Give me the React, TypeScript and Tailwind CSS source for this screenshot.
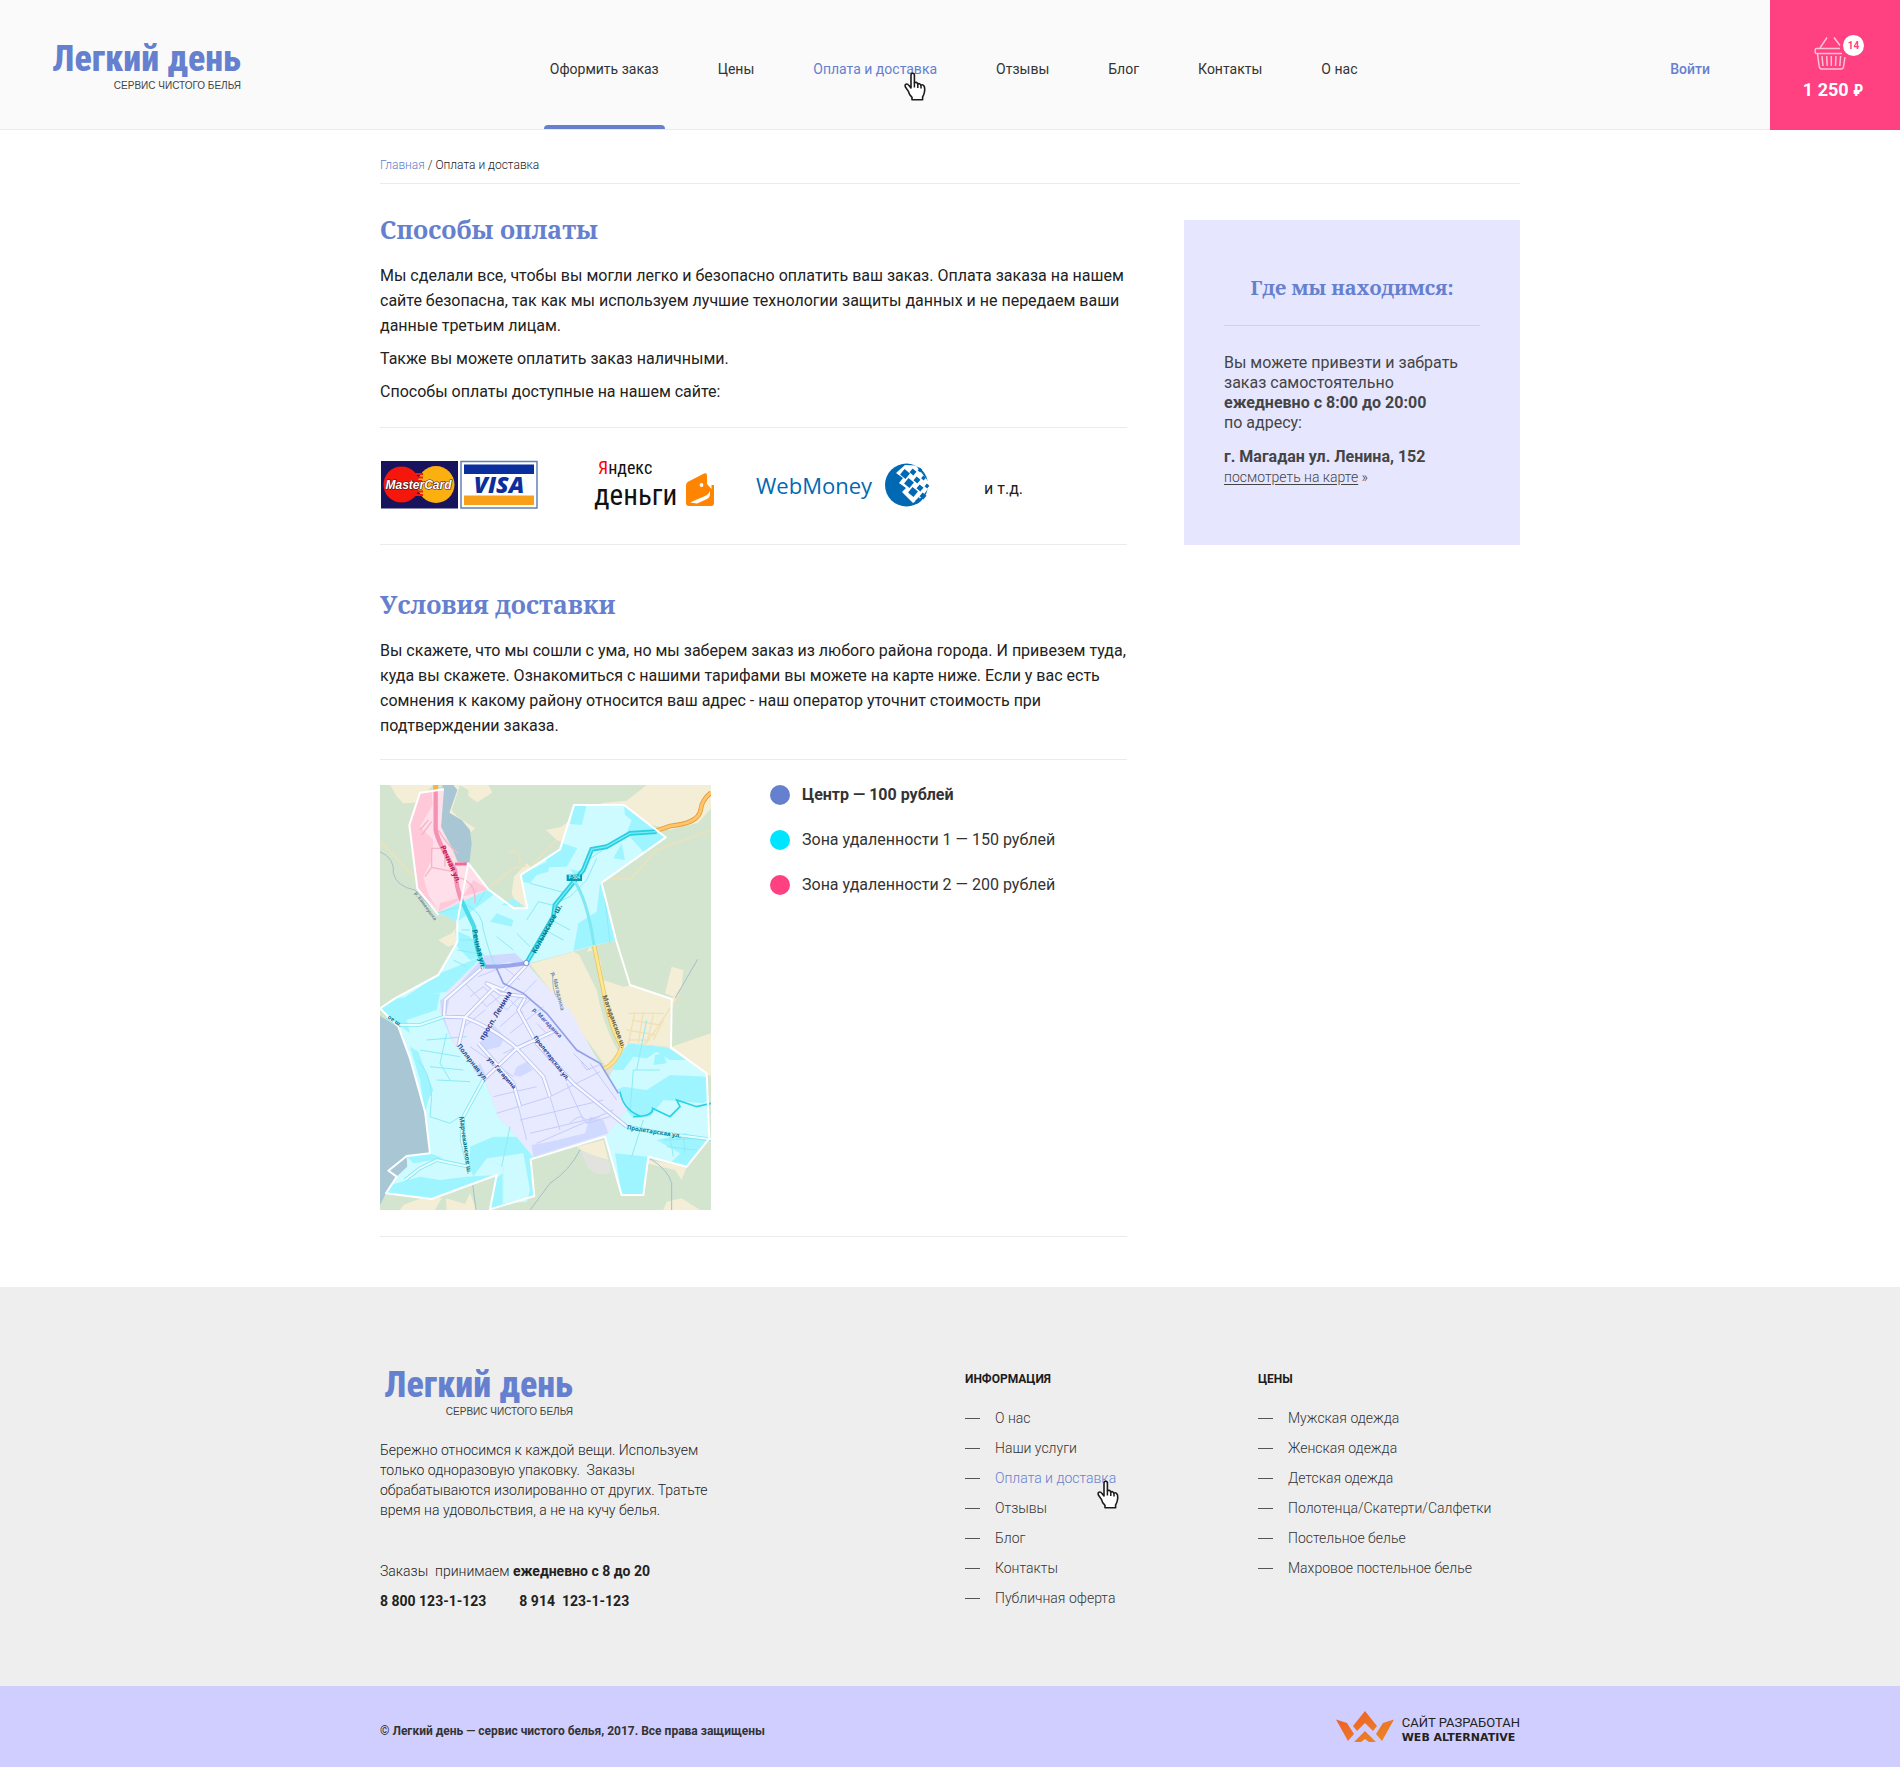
import React from "react";

const NAV = ["Оформить заказ", "Цены", "Оплата и доставка", "Отзывы", "Блог", "Контакты", "О нас"];
const INFO = ["О нас", "Наши услуги", "Оплата и доставка", "Отзывы", "Блог", "Контакты", "Публичная оферта"];
const PRICES = [
  "Мужская одежда",
  "Женская одежда",
  "Детская одежда",
  "Полотенца/Скатерти/Салфетки",
  "Постельное белье",
  "Махровое постельное белье",
];
const ZONES = [
  { dot: "bg-[#6580ce]", text: "Центр — 100 рублей", weight: "font-bold" },
  { dot: "bg-[#00e5ff]", text: "Зона удаленности 1 — 150 рублей", weight: "font-normal" },
  { dot: "bg-[#ff4081]", text: "Зона удаленности 2 — 200 рублей", weight: "font-normal" },
];

function Logo() {
  return (
    <a href="#" className="flex w-[190px] flex-col items-end gap-1">
      <span className="whitespace-nowrap font-['Roboto_Condensed','Roboto',sans-serif] text-[36px] leading-9 font-extrabold text-[#6580ce]">
        Легкий день
      </span>
      <span className="font-['Liberation_Sans',sans-serif] text-[10px] leading-[10px] whitespace-nowrap text-[#444]">
        СЕРВИС ЧИСТОГО БЕЛЬЯ
      </span>
    </a>
  );
}

function Hand({ className }: { className: string }) {
  return (
    <svg aria-hidden="true" viewBox="0 0 22 29" className={`pointer-events-none absolute h-[29px] w-[22px] ${className}`}>
      <path
        d="M7 3.2Q7 1.2 8.7 1.2 10.4 1.2 10.4 3.2V10.8L11 10.5Q13 9.8 13.6 12 15.8 10.8 16.8 13.2 18.8 12 20 14Q21 15.5 20.6 19 20.4 22 18.6 25V27.8H8V25.4Q5 22.5 4.4 19.4L1.4 15Q.6 12.8 2 12.2 3.6 11.6 5 13.6L7 16Z"
        fill="#fff"
        stroke="#1c1c1c"
        strokeWidth="1.6"
        strokeLinejoin="round"
      />
      <path d="M10.4 10.5V15.5M13.8 12V16M17 13.5V16.5" stroke="#1c1c1c" strokeWidth="1.5" fill="none" />
    </svg>
  );
}

function Basket() {
  return (
    <svg aria-hidden="true" viewBox="0 0 32 34" className="h-[34px] w-8" fill="none" stroke="#ffc3d6" strokeWidth="1.5">
      <path d="M6 12L13 1.5M20 1.5L26 9.5" />
      <path d="M26 12.5H2.5Q1.2 12.5 1.2 13.8V16.2Q1.2 17.6 2.5 17.6H28" />
      <path d="M3.5 17.8L5.2 30.5Q5.7 33 8 33H27Q29 33 29.5 30.8L31 21" />
      <path d="M8 20L9 30M12.7 20L13.2 30M17.3 20V30M22 20L21.5 30M26.6 20L25.8 30" />
    </svg>
  );
}

function Cards() {
  return (
    <svg role="img" aria-label="MasterCard, Visa" viewBox="0 0 158 50" className="h-[50px] w-[158px]">
      <rect x="1" y="1" width="77" height="47.500" fill="#17135c" />
      <circle cx="21.500" cy="24.500" r="18" fill="#f5160c" />
      <circle cx="56" cy="24.500" r="18.500" fill="#fbb010" />
      <path d="M35 14h8M33 17.500h10M32 21h10M32 28h10M33 31.500h10M35 35h8" stroke="#f5160c" strokeWidth="1.800" />
      <text x="38.500" y="29" textAnchor="middle" fontFamily="Liberation Sans" fontStyle="italic" fontWeight="700" fontSize="12" fill="#fff" stroke="#3b1a1a" strokeWidth="1.200" paintOrder="stroke">
        MasterCard
      </text>
      <rect x="81" y="1.500" width="76" height="46.500" fill="#fff" stroke="#6580b4" strokeWidth="1.500" />
      <rect x="84" y="4.500" width="70" height="9.500" fill="#0a2f9c" />
      <rect x="84" y="35.500" width="70" height="9.500" fill="#f9a01b" />
      <text x="119" y="32.500" textAnchor="middle" fontFamily="Open Sans" fontStyle="italic" fontWeight="800" fontSize="23" fill="#0a2f9c">
        VISA
      </text>
    </svg>
  );
}

function YandexMoney() {
  return (
    <svg role="img" aria-label="Яндекс Деньги" viewBox="0 0 122 54" className="h-[54px] w-[122px]">
      <text x="4" y="16" fontFamily="Roboto Condensed, Open Sans" fontSize="18" fill="#111">
        <tspan fill="#f00">Я</tspan>ндекс
      </text>
      <text x="0" y="47" fontFamily="Roboto Condensed, Open Sans" fontSize="29" fill="#111">
        деньги
      </text>
      <path d="M92 27Q92 24.500 94.500 23.500L110 15.500Q113 14.500 113 17.500V26L117.500 31V27H120V45Q120 48 117 48H95Q92 48 92 45Z" fill="#ff8500" />
      <path d="M96 44.500L111 38Q115 36 116 32.500V36Q116 40 112 41.500L103 45.500Z" fill="#fff" />
      <circle cx="107.500" cy="27" r="1.900" fill="#fff" />
    </svg>
  );
}

function WebMoney() {
  const cells = [
    [20, 10, 7], [24, 19, 7], [28, 28, 7],
    [28, 8, 5], [32, 16, 5], [35, 24, 5], [38, 32, 5],
    [35, 6, 3.4], [38.5, 14, 3.4], [42, 22, 3.4],
  ];
  return (
    <span className="flex items-center gap-[13px]">
      <span className="font-['Open_Sans',sans-serif] text-[22px] leading-7 text-[#0069b4]">WebMoney</span>
      <svg aria-hidden="true" viewBox="0 0 45 44" className="h-11 w-[45px]">
        <clipPath id="globe">
          <circle cx="21.500" cy="22" r="21.500" />
        </clipPath>
        <circle cx="21.500" cy="22" r="21.500" fill="#0069b4" />
        <path d="M20 2L31 2.500 46 22 37 34 28 40 17 29 21 25 14 20 18 15 11 10Z" fill="#fff" />
        <path d="M30 38L34 34 37 40 32 43Z" fill="#0069b4" clipPath="url(#globe)" />
        {cells.map(([x, y, s]) => (
          <rect key={`${x}-${y}`} x={x - s / 2} y={y - s / 2 + 1} width={s} height={s} transform={`rotate(40 ${x} ${y + 1})`} fill="#0069b4" />
        ))}
      </svg>
    </span>
  );
}

function Label({ x, y, r, c = "#2c3f93", s = 22, children }: { x: number; y: number; r: number; c?: string; s?: number; children: string }) {
  return (
    <text transform={`translate(${x} ${y}) rotate(${r})`} fontFamily="Open Sans" fontWeight="700" fontSize={s} fill={c}>
      {children}
    </text>
  );
}

function ZoneMap() {
  return (
    <svg role="img" aria-label="Карта зон доставки" viewBox="30 15 993 1275" className="h-[425px] w-[331px] shrink-0">
      <rect x="30" y="15" width="993" height="1275" fill="#d4e5cf" />
      <g fill="#f5eed7">
        <path d="M30 15H60L82 52 100 70 135 68 190 15Z" />
        <path d="M268 15H355L367 38 322 67 295 48 296 30Z" />
        <path d="M240 15H270L255 60 245 90 262 110 315 145 300 160 240 110Z" />
        <path d="M690 70L770 62 830 15H1023V85L985 128 900 150 800 120 740 80Z" />
        <path d="M528 150L575 140 600 120 585 190 560 180Z" />
        <path d="M432 290L470 250 485 265 455 285 470 385 440 375 425 340Z" />
        <path d="M205 480L245 460 262 440 262 490 235 500Z" />
        <path d="M480 552L610 515 640 530 660 500 690 540 700 600 760 620 780 617 905 655 930 630 900 700 905 800 1023 760V890L890 800 780 790 720 880 680 820 540 630Z" />
        <path d="M905 560L940 570 935 620 910 650 885 640Z" />
        <path d="M100 1275L180 1245 215 1255 195 1290H90ZM228 1255L285 1272 300 1240 320 1290H230ZM620 1100L700 1080 715 1140 650 1120ZM830 1140L900 1150 950 1160 935 1200 915 1170 830 1150ZM890 1265L935 1255 990 1290H880Z" />
      </g>
      <path d="M625 520L675 510 700 630 760 790 745 815Q700 740 680 630Z" fill="#d4e5cf" />
      <path d="M630 1110L720 1145 722 1175Q690 1195 655 1165ZM740 820L770 800 775 850 720 890 708 862Z" fill="#e2e2df" />
      <g fill="none" stroke="#e9e2bd" strokeWidth="5">
        <path d="M30 182L130 290M360 318L430 265 470 258M480 262L560 180M1023 150L860 210 780 298 725 295M450 250Q450 200 415 218" />
      </g>
      <path d="M218 15H250L262 30 238 98 275 120 300 150 305 190 298 252H265L250 210 213 140Z" fill="#a9c6d5" />
      <path d="M30 708L85 742 120 835 165 995 180 1120 110 1128 112 1160 75 1195 48 1240 30 1275Z" fill="#a9c6d5" />
      <g fill="none" stroke="#a4bfcb" strokeWidth="3">
        <path d="M30 215Q75 235 70 280 80 320 135 330M135 330L205 405" />
        <path d="M983 538L915 655M550 575Q540 620 570 680 590 730 612 745 600 780 625 810M630 1110Q600 1170 540 1210L480 1290M840 1135Q895 1170 905 1210V1290M305 1190L318 1290" />
      </g>
      <path d="M197 15V150" stroke="#f7b04f" strokeWidth="15" />
      <path d="M1023 38Q995 60 992 90 985 130 900 138L860 152" fill="none" stroke="#e29a3c" strokeWidth="14" />
      <path d="M1023 38Q995 60 992 90 985 130 900 138L860 152" fill="none" stroke="#ffc56b" strokeWidth="9" />
      <path d="M672 495L700 630Q720 740 755 800 740 850 700 868" fill="none" stroke="#e9c75f" strokeWidth="13" />
      <path d="M672 495L700 630Q720 740 755 800 740 850 700 868" fill="none" stroke="#fde694" strokeWidth="8" />
      <g fill="none" stroke="#efe1b6" strokeWidth="4">
        <path d="M775 700H880M785 720L870 735M770 750L860 765M775 780H840M795 695L775 790M820 695L805 790M850 705L830 790M880 720L850 780M930 640L850 760 800 820" />
      </g>

      <path d="M150 38L222 28 213 140 262 245 295 250 355 328 205 398 142 325 118 135Z" fill="#ffe0ea" />
      <path d="M150 38L185 35 188 75 150 140 190 180 185 240 160 290 175 345 205 390 142 325 118 135Z" fill="#ffc9da" />
      <path d="M355 328L310 300 270 360 205 395 210 370Z" fill="#ffc9da" />

      <path
        d="M205 398L355 328 432 385H472L452 285 570 208 612 75H762L887 172 695 308 738 480 470 552 435 520 345 527 230 635 208 690 250 790 345 900 385 1010 440 1070 490 1130 482 1138 493 1248 360 1288 380 1185 185 1257 48 1240 80 1190 112 1160 110 1128 180 1120 165 995 120 835 85 740 30 685 75 655 205 585 262 485V425Z"
        fill="#cdfbff"
      />
      <path d="M775 790L895 803 1010 880 1018 1075 950 1160 835 1130 820 1245H755L705 1070 775 985 715 895Z" fill="#cdfbff" />
      <g fill="#9ff5ff">
        <path d="M612 75H650L635 135 600 132ZM762 77L887 172 820 215 770 160 785 120 765 105ZM578 190L622 205 590 260 535 262 525 230 570 208ZM600 268L640 275 625 300ZM755 190L765 240 730 235ZM452 285L540 240 535 275 500 285 480 310 455 305ZM690 310L738 480 610 512 625 430 680 395Z" />
        <path d="M205 398L355 328 370 345 330 375 262 425ZM255 450L300 470 345 527 300 540 262 500ZM210 580L340 527 230 635 100 655ZM30 685L75 655 210 640 200 690 110 720 120 760 100 745Z" />
        <path d="M120 800L145 815 165 870 190 930 175 960 165 1000 150 900ZM300 1100L370 1070 440 1070 488 1130 482 1138 493 1248 400 1280 400 1160 350 1135 310 1190 300 1165ZM60 1215L150 1190 210 1200 290 1190 380 1185 185 1257 48 1240ZM110 1130L180 1120 220 1135 130 1150ZM360 1288L372 1200 398 1180V1280Z" />
        <path d="M775 790L895 803 950 840 900 840 860 815 830 835 790 830 760 870 725 870ZM720 940L760 920 830 930 900 885 1010 890 1015 960 1000 970 880 960 840 1010 790 1015 760 980ZM735 1120L835 1130 820 1245H755ZM860 1080L945 1060 1010 1080 950 1160 900 1150 930 1120Z" />
        <path d="M430 355L465 380 395 375ZM380 400L430 420 425 440 360 425ZM880 820L890 850 850 855 855 825Z" />
      </g>
      <path d="M350 1135L460 1120 480 1230 470 1265 400 1270 400 1160Z" fill="#cdfbff" />

      <path d="M345 527L435 520 470 552 540 630 600 690 660 800 715 895 750 940 775 985 705 1070 490 1130 440 1070 385 1010 345 900 250 790 208 690 230 635Z" fill="#e8eaff" />
      <g fill="#d0d9ff">
        <path d="M345 527L435 520 470 552 440 560 420 545 340 565 270 610ZM210 660L240 650 225 720 250 790 215 710ZM370 735L405 770 390 800 340 812 328 790ZM440 860L470 845 488 870 450 890 430 885ZM485 1095L540 1085 645 1060 660 1010 700 1020 715 1060 490 1130ZM330 850L345 880 340 900 310 870Z" />
      </g>

      <g fill="none" stroke="#8debf5" strokeWidth="3">
        <path d="M205 398L290 375Q340 400 340 450 355 510 375 560M345 335L320 375M275 450H300M270 480H310M262 510L320 520M250 540L290 560M470 420L505 365 545 375 600 350 650 300 680 235M545 420L600 450M525 450L580 480M440 460L480 500M380 470L430 510M700 310L720 490M640 250L720 195M480 310L590 340" />
        <path d="M170 780L290 770M150 810L270 830M180 860L280 870M200 900L300 905M230 760L210 850 240 900M140 840Q180 870 185 950L180 1010 240 1030 270 1010M420 1040L395 1160M870 870H790L780 1000M880 1080L990 1075M890 1100L980 1110M900 1070L910 1130M940 1065L945 1120M820 1020L785 1130M830 720L800 870" />
      </g>
      <path d="M790 1010Q850 1010 848 985L900 1010 930 980 920 960 980 980 1023 970M750 935Q760 990 810 1008" fill="none" stroke="#25d3e5" strokeWidth="5" />
      <g fill="none" stroke="#f5b4cb" strokeWidth="4">
        <path d="M150 150L175 120M155 165L185 125M185 205H225V260M185 205V262L250 275M185 262L165 290M255 290Q320 300 315 370M205 150Q235 200 265 220" />
      </g>

      <g fill="none" stroke="#c6ccfa" strokeWidth="3">
        <path d="M285 610L350 680 400 640 460 700M325 590L400 560 450 600M300 650L340 620 410 690 500 600M370 700L420 650M390 740L480 660M420 760L520 680M345 690L270 750M400 820L480 780M380 1000L540 950 690 875M370 950L500 920M440 960L470 1080M540 950L570 1050M590 910L640 1020M660 850L740 960M630 840L650 870 700 850M450 1020L700 960M480 1060L690 1010M500 1090L730 990M300 800L430 890M610 820L660 870M500 730L540 770" />
        <path d="M600 1030Q640 990 650 1030L720 1010" />
      </g>
      <g fill="none" stroke="#b9c1f3" strokeWidth="12" strokeLinejoin="round">
        <path d="M340 560L225 660 222 710 285 712 370 625M285 712L265 800M285 712Q380 750 440 805L520 890 540 950M470 650L390 640 350 610 400 630 470 555M465 655L445 690 500 790 610 910 770 1040M440 805L340 900M430 910L450 980M560 750L440 805M325 790L430 910" />
      </g>
      <g fill="none" stroke="#f8f8ff" strokeWidth="7" strokeLinejoin="round">
        <path d="M340 560L225 660 222 710 285 712 370 625M285 712L265 800M285 712Q380 750 440 805L520 890 540 950M470 650L390 640 350 610 400 630 470 555M465 655L445 690 500 790 610 910 770 1040M440 805L340 900M430 910L450 980M560 750L440 805M325 790L430 910" />
      </g>
      <path d="M222 710L150 735 85 735 50 710M340 900L280 1010 275 1080 295 1160 200 1140 150 1165 105 1200M770 1040L880 1060 1023 1078" fill="none" stroke="#82e7f2" strokeWidth="11" />
      <path d="M222 710L150 735 85 735 50 710M340 900L280 1010 275 1080 295 1160 200 1140 150 1165 105 1200M770 1040L880 1060 1023 1078" fill="none" stroke="#e8fdff" strokeWidth="6" />

      <path d="M375 555L400 610 460 640 530 700 620 810 690 850 745 940" fill="none" stroke="#93a0ea" strokeWidth="5" />
      <path d="M197 30V150Q205 190 255 270 260 330 275 362" fill="none" stroke="#f392b3" strokeWidth="13" />
      <path d="M255 252H290" stroke="#f06a95" strokeWidth="9" />
      <path d="M275 362L312 440Q318 520 345 560" fill="none" stroke="#4bdceb" strokeWidth="13" />
      <path d="M345 560Q410 560 468 550" fill="none" stroke="#97a6ea" strokeWidth="12" />
      <path d="M470 548L550 410 555 375 640 270 665 208 710 200 780 160 860 155" fill="none" stroke="#27cfe0" strokeWidth="14" />
      <path d="M470 548L550 410 555 375 640 270 665 208 710 200 780 160 860 155" fill="none" stroke="#7beaf5" strokeWidth="4" />
      <path d="M610 300Q650 350 672 495" fill="none" stroke="#7fe8f2" strokeWidth="9" />
      <circle cx="469" cy="549" r="8" fill="#fff" stroke="#6b8be0" strokeWidth="3" />

      <path
        d="M205 405L142 325 118 135 150 38 222 28M295 250L355 328 432 385H472L452 285 570 208 612 75H762L887 172 695 308 738 480 780 615 905 657 903 803 1010 880 1018 1075 950 1160 835 1130 820 1245H755L705 1070 482 1138 493 1248 360 1288 380 1185 185 1257 48 1240 80 1190 55 1172 110 1128 180 1120 165 995 120 835 85 740 30 685 75 655 205 585 262 485V425Z"
        fill="none"
        stroke="#fff"
        strokeWidth="6"
        strokeLinejoin="round"
      />

      <rect x="590" y="284" width="46" height="19" fill="#069aaa" />
      <text x="613" y="298" textAnchor="middle" fontFamily="Open Sans" fontWeight="600" fontSize="13" fill="#d8fbff">Р-504</text>
      <Label x={211} y={200} r={66} c="#c0174f" s={22}>Речная ул.</Label>
      <Label x={306} y={450} r={77} c="#08798a" s={22}>Речная ул.</Label>
      <Label x={497} y={522} r={-61} c="#08798a">Колымское ш.</Label>
      <Label x={340} y={782} r={-59}>просп. Ленина</Label>
      <Label x={260} y={798} r={52} c="#1b5a8d" s={20}>Полярная ул.</Label>
      <Label x={352} y={838} r={49} s={18}>ул. Гагарина</Label>
      <Label x={489} y={773} r={52} s={18}>Пролетарская ул.</Label>
      <Label x={487} y={690} r={46} c="#4c5fb6" s={17}>р. Магаданка</Label>
      <Label x={544} y={578} r={76} c="#7890ac" s={17}>р. Магаданка</Label>
      <Label x={697} y={648} r={70} c="#6b6250" s={20}>Магаданское ш.</Label>
      <Label x={268} y={1010} r={82} c="#08798a" s={19}>Марчеканское ш.</Label>
      <Label x={770} y={1048} r={9} c="#08798a" s={18}>Пролетарская ул.</Label>
      <Label x={52} y={714} r={35} c="#08798a" s={17}>ое ш.</Label>
      <Label x={133} y={340} r={54} c="#72869a" s={14}>р. Каменушка</Label>
    </svg>
  );
}

function FooterList({ title, items, active }: { title: string; items: string[]; active?: string }) {
  return (
    <nav aria-label={title} className="mt-[2px]">
      <h3 className="text-xs leading-5 font-bold text-[#1c1c1c] uppercase">{title}</h3>
      <ul className="mt-[14px]">
        {items.map((item) => (
          <li key={item} className="flex h-[30px] items-center gap-[15px] text-sm font-light whitespace-nowrap">
            <span className="h-px w-[15px] bg-[#555]" />
            {item === active ? (
              <a href="#" className="relative text-[#6580ce]">
                {item}
                <Hand className="top-3 -right-[3px]" />
              </a>
            ) : (
              <a href="#" className="text-[#333]">{item}</a>
            )}
          </li>
        ))}
      </ul>
    </nav>
  );
}

const H2 = "font-['Noto_Serif','Liberation_Serif',serif] text-[25px] leading-9 font-bold text-[#6580ce]";

export default function App() {
  return (
    <div className="min-h-screen bg-white font-['Roboto',sans-serif] text-[#222]">
      <header className="flex h-[130px] border-b border-[#ebebeb] bg-[#fafafa]">
        <div className="flex flex-1 justify-between pr-[60px] pl-[51px]">
          <div className="pt-[41px]"><Logo /></div>
          <nav aria-label="Главное меню" className="mr-1 flex gap-[47px]">
            {NAV.map((item, i) => (
              <a key={item} href="#" className={i === 2 ? "relative flex items-center px-[6px] pt-2 text-sm text-[#6580ce]" : "relative flex items-center px-[6px] pt-2 text-sm text-[#333]"}>
                <span className="relative">
                  {item}
                  {i === 2 && <Hand className="top-[13px] right-[11px]" />}
                </span>
                {i === 0 && <span className="absolute inset-x-0 bottom-0 h-1 rounded-t bg-[#6580ce]" />}
              </a>
            ))}
          </nav>
          <a href="#" className="flex items-center pt-2 text-sm font-medium text-[#6580ce]">Войти</a>
        </div>
        <a href="#" aria-label="Корзина: 14 вещей, 1 250 ₽" className="-mb-px flex w-[130px] flex-col items-center bg-[#ff4081] pt-9 text-white">
          <span className="relative -ml-[10px]">
            <Basket />
            <span className="absolute -top-px left-[29px] flex h-[21px] w-[21px] items-center justify-center rounded-full bg-white text-[10px] font-bold text-[#ff4081]">14</span>
          </span>
          <span className="mt-2 pr-1 text-lg leading-6 font-bold">
            1 250 <span className="font-['Roboto_Condensed',sans-serif] text-base">₽</span>
          </span>
        </a>
      </header>

      <div className="mx-auto max-w-[1140px]">
        <nav aria-label="Путь" className="border-b border-[#ebebeb] pt-[25px] pb-2 text-xs leading-5 font-light text-[#222]">
          <a href="#" className="text-[#6580ce]">Главная</a> / Оплата и доставка
        </nav>

        <div className="flex items-start justify-between">
          <main className="w-[747px] pt-[27px]">
            <h2 className={H2}>Способы оплаты</h2>
            <div className="mt-4 space-y-2 text-base leading-[25px]">
              <p>
                Мы сделали все, чтобы вы могли легко и безопасно оплатить ваш заказ. Оплата заказа на нашем сайте безопасна,
                так как мы используем лучшие технологии защиты данных и не передаем ваши данные третьим лицам.
              </p>
              <p>Также вы можете оплатить заказ наличными.</p>
              <p>Способы оплаты доступные на нашем сайте:</p>
            </div>
            <div className="mt-[23px] flex h-[118px] items-center border-y border-[#ebebeb] pb-[3px]">
              <Cards />
              <span className="ml-14"><YandexMoney /></span>
              <span className="ml-10"><WebMoney /></span>
              <span className="mt-2 ml-[54px]">и т.д.</span>
            </div>

            <h2 className={`${H2} mt-[41px]`}>Условия доставки</h2>
            <p className="mt-4 text-base leading-[25px]">
              Вы скажете, что мы сошли с ума, но мы заберем заказ из любого района города. И привезем туда, куда вы скажете.
              Ознакомиться с нашими тарифами вы можете на карте ниже. Если у вас есть сомнения к какому району относится ваш
              адрес - наш оператор уточнит стоимость при подтверждении заказа.
            </p>
            <div className="mt-[21px] mb-[50px] flex border-y border-[#ebebeb] pt-[25px] pb-[26px]">
              <ZoneMap />
              <ul className="ml-[59px] flex flex-col gap-[25px]">
                {ZONES.map((z) => (
                  <li key={z.text} className="flex h-5 items-center gap-3 text-base text-[#333]">
                    <span className={`h-5 w-5 rounded-full ${z.dot}`} />
                    <span className={z.weight}>{z.text}</span>
                  </li>
                ))}
              </ul>
            </div>
          </main>

          <aside className="mt-9 w-[336px] bg-[#e6e6ff] px-10 pt-[52px] pb-[58px] text-[#444]">
            <h2 className="border-b border-[#d3d3e6] pb-[21px] text-center font-['Noto_Serif','Liberation_Serif',serif] text-xl leading-8 font-bold text-[#6580ce]">
              Где мы находимся:
            </h2>
            <p className="mt-[27px] text-base leading-5">
              Вы можете привезти и забрать заказ самостоятельно
              <br />
              <strong>ежедневно с 8:00 до 20:00</strong>
              <br />
              по адресу:
            </p>
            <p className="mt-[14px] text-base leading-5 font-bold">г. Магадан ул. Ленина, 152</p>
            <p className="text-sm leading-5 font-light">
              <a href="#" className="underline underline-offset-2">посмотреть на карте</a> »
            </p>
          </aside>
        </div>
      </div>

      <footer>
        <div className="bg-[#eee] pt-20 pb-[73px]">
          <div className="mx-auto grid max-w-[1140px] grid-cols-[585px_293px_1fr]">
            <div className="text-sm leading-5">
              <div className="pl-[3px]"><Logo /></div>
              <p className="mt-[23px] w-[335px] font-light whitespace-pre-line">
                {"Бережно относимся к каждой вещи. Используем\nтолько одноразовую упаковку.\u00a0 Заказы\nобрабатываются изолированно от других. Тратьте\nвремя на удовольствия, а не на кучу белья."}
              </p>
              <p className="mt-[41px] font-light">
                Заказы&nbsp; принимаем <strong className="font-bold">ежедневно с 8 до 20</strong>
              </p>
              <p className="mt-[10px] flex gap-[33px] font-bold">
                <a href="tel:88001231123">8 800 123-1-123</a>
                <a href="tel:89141231123">8 914&nbsp; 123-1-123</a>
              </p>
            </div>
            <FooterList title="Информация" items={INFO} active="Оплата и доставка" />
            <FooterList title="Цены" items={PRICES} />
          </div>
        </div>
        <div className="bg-[#d0ceff]">
          <div className="mx-auto flex h-[81px] max-w-[1140px] items-center justify-between">
            <p className="mt-2 text-xs font-bold text-[#333]">© Легкий день — сервис чистого белья, 2017. Все права защищены</p>
            <a href="#" className="flex items-center gap-2 text-[#222]">
              <svg aria-hidden="true" viewBox="0 0 58 31" className="h-[31px] w-[58px]">
                <defs>
                  <linearGradient id="crown" x1="0" y1="0" x2="1" y2="1">
                    <stop offset="0" stopColor="#ef5a28" />
                    <stop offset="1" stopColor="#e98a25" />
                  </linearGradient>
                </defs>
                <path d="M0 8.500L11 12 18 23 12 30ZM58 8.500L47 12 40 23 46 30ZM29 0L41 15 37 20 29 12 21 20 17 15ZM29 20L40 31H33L29 28 25 31H18Z" fill="url(#crown)" />
              </svg>
              <span className="flex flex-col pt-[6px]">
                <span className="text-[13px] leading-4">САЙТ РАЗРАБОТАН</span>
                <span className="font-['DejaVu_Sans',sans-serif] text-[11px] leading-[14px] font-bold">WEB ALTERNATIVE</span>
              </span>
            </a>
          </div>
        </div>
      </footer>
    </div>
  );
}
